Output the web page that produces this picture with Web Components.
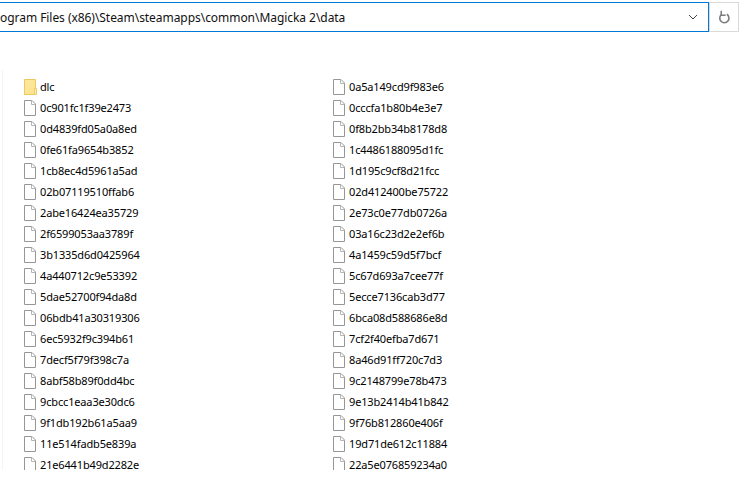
<!DOCTYPE html>
<html>
<head>
<meta charset="utf-8">
<style>
  html, body { margin: 0; padding: 0; background: #fff; height: 100%; overflow: hidden; }
</style>
</head>
<body>
<explorer-window>
  <address-bar path="ogram Files (x86)\Steam\steamapps\common\Magicka 2\data"></address-bar>
  <file-list id="list"></file-list>
</explorer-window>
<script>
const FILES = [
  "0a5a149cd9f983e6",
  "0c901fc1f39e2473", "0cccfa1b80b4e3e7",
  "0d4839fd05a0a8ed", "0f8b2bb34b8178d8",
  "0fe61fa9654b3852", "1c4486188095d1fc",
  "1cb8ec4d5961a5ad", "1d195c9cf8d21fcc",
  "02b07119510ffab6", "02d412400be75722",
  "2abe16424ea35729", "2e73c0e77db0726a",
  "2f6599053aa3789f", "03a16c23d2e2ef6b",
  "3b1335d6d0425964", "4a1459c59d5f7bcf",
  "4a440712c9e53392", "5c67d693a7cee77f",
  "5dae52700f94da8d", "5ecce7136cab3d77",
  "06bdb41a30319306", "6bca08d588686e8d",
  "6ec5932f9c394b61", "7cf2f40efba7d671",
  "7decf5f79f398c7a", "8a46d91ff720c7d3",
  "8abf58b89f0dd4bc", "9c2148799e78b473",
  "9cbcc1eaa3e30dc6", "9e13b2414b41b842",
  "9f1db192b61a5aa9", "9f76b812860e406f",
  "11e514fadb5e839a", "19d71de612c11884",
  "21e6441b49d2282e", "22a5e076859234a0"
];

class ExplorerWindow extends HTMLElement {
  constructor() {
    super();
    this.attachShadow({ mode: "open" });
    this.shadowRoot.innerHTML = `
      <style>
        :host {
          display: flex;
          flex-direction: column;
          width: 750px;
          height: 478px;
          font-family: "Noto Sans", "Open Sans", sans-serif;
          color: #000;
          background: #fff;
        }
      </style>
      <slot></slot>
    `;
  }
}
customElements.define("explorer-window", ExplorerWindow);

class AddressBar extends HTMLElement {
  constructor() {
    super();
    this.attachShadow({ mode: "open" });
    this.shadowRoot.innerHTML = `
      <style>
        :host {
          display: flex;
          padding: 2px 11px 0 0;
          height: 30px;
          flex: none;
        }
        .box {
          flex: 1;
          display: flex;
          align-items: center;
          min-width: 0;
          border: solid #0078d7;
          border-width: 1px 1px 1px 0;
        }
        .path {
          flex: 1;
          font-size: 12px;
          letter-spacing: -0.05px;
          white-space: nowrap;
          color: #111;
        }
        .chev { width: 28px; margin-right: 1px; display: flex; justify-content: center; }
        .refresh {
          width: 30px;
          display: flex;
          align-items: center;
          justify-content: center;
          border: 1px solid #d9d9d9;
          box-sizing: border-box;
        }
      </style>
      <div class="box">
        <span class="path"></span>
        <span class="chev">
          <svg width="10" height="6" viewBox="0 0 10 6"><path d="M1 1l4 4 4-4" fill="none" stroke="#444" stroke-width="1"/></svg>
        </span>
      </div>
      <div class="refresh">
        <svg width="13" height="14" viewBox="0 0 13 14"><path d="M3.6 4.4A4.6 4.6 0 1 0 8.8 4.2" fill="none" stroke="#7d7d7d" stroke-width="1.6"/><path d="M3.2 .8v4.4h4.4" fill="none" stroke="#7d7d7d" stroke-width="1.5"/></svg>
      </div>
    `;
    this.shadowRoot.querySelector(".path").textContent = this.getAttribute("path");
  }
}
customElements.define("address-bar", AddressBar);

class FileRow extends HTMLElement {
  constructor() {
    super();
    this.attachShadow({ mode: "open" });
    const folder = this.hasAttribute("folder");
    const icon = folder
      ? `<svg width="13" height="16" viewBox="0 0 13 16"><defs><linearGradient id="f" x1="0" y1="0" x2="1" y2="1"><stop offset="0" stop-color="#fce89f"/><stop offset="1" stop-color="#ffe38f"/></linearGradient></defs><path d="M.5.5h11v15H.5z" fill="url(#f)" stroke="#eec95f"/><path d="M10.5 9.5h2v6h-2z" fill="#fff2c4" stroke="#eec95f"/></svg>`
      : `<svg width="12" height="16" viewBox="0 0 12 16"><path d="M.5.5h7.5l3.5 3.5v11.5H.5z" fill="#fff" stroke="#969696"/><path d="M7.5.5v4h4" fill="none" stroke="#b5b5b5"/></svg>`;
    this.shadowRoot.innerHTML = `
      <style>
        :host {
          display: flex;
          align-items: center;
          height: 21px;
          gap: 2px;
          font-size: 11px;
          letter-spacing: -0.15px;
          white-space: nowrap;
        }
        .icon { width: 14px; height: 16px; margin-top: 1px; display: flex; }
      </style>
      <span class="icon">${icon}</span>
      <slot></slot>
    `;
  }
}
customElements.define("file-row", FileRow);

class FileList extends HTMLElement {
  constructor() {
    super();
    this.attachShadow({ mode: "open" });
    this.shadowRoot.innerHTML = `
      <style>
        :host {
          display: block;
          margin: 38px 0 0 2px;
          height: 400px;
          box-sizing: border-box;
          overflow: hidden;
          padding: 6px 0 0 21px;
          border-left: 1px solid #f4f4f4;
          flex: none;
        }
        .grid {
          display: grid;
          grid-template-columns: 309px 309px;
          grid-auto-rows: 21px;
        }
      </style>
      <div class="grid"><file-row folder>dlc</file-row></div>
    `;
    const grid = this.shadowRoot.querySelector(".grid");
    FILES.forEach((name) => {
      const row = document.createElement("file-row");
      row.textContent = name;
      grid.appendChild(row);
    });
  }
}
customElements.define("file-list", FileList);
</script>
</body>
</html>
